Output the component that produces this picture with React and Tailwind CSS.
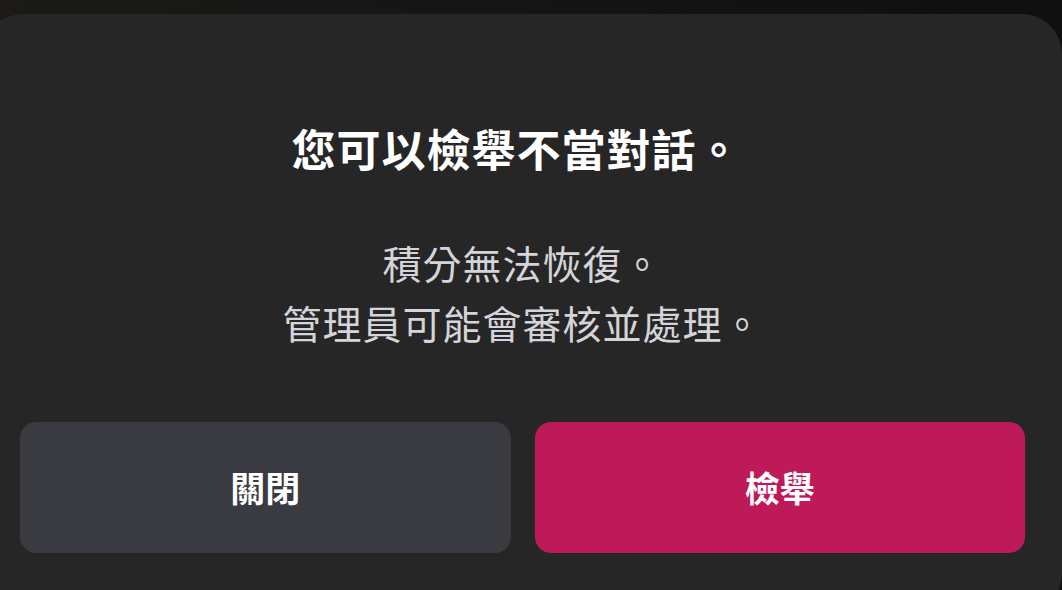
import React from 'react';

export default function App() {
  const font = { fontFamily: '"Noto Sans CJK TC", "Noto Sans", sans-serif' };

  return (
    <div className="w-[1062px] h-[590px] overflow-hidden bg-gradient-to-r from-[#1c1a17] to-[#0f0f0f] pt-[14px]" style={font}>
      {/* Sheet */}
      <div className="ml-[-17px] w-[1079px] h-[600px] rounded-[40px] bg-[#262626] px-[37px] pt-[106px]">
        <h1 className="pr-[12px] text-center text-white font-bold text-[44px] leading-[56px] tracking-[1px]">
          您可以檢舉不當對話。
        </h1>
        <div className="mt-[56px] text-center text-[#d4d4da] text-[39px] leading-[60px] tracking-[1px]">
          <p>積分無法恢復。</p>
          <p>管理員可能會審核並處理。</p>
        </div>

        {/* Actions */}
        <div className="mt-[70px] flex gap-[24px]">
          <button className="flex-1 h-[131px] rounded-[16px] bg-[#3a3b41] text-white text-[35px] font-bold flex items-center justify-center">
            關閉
          </button>
          <button className="flex-1 h-[131px] rounded-[16px] bg-[#be1a5a] text-white text-[35px] font-bold flex items-center justify-center">
            檢舉
          </button>
        </div>
      </div>
    </div>
  );
}
